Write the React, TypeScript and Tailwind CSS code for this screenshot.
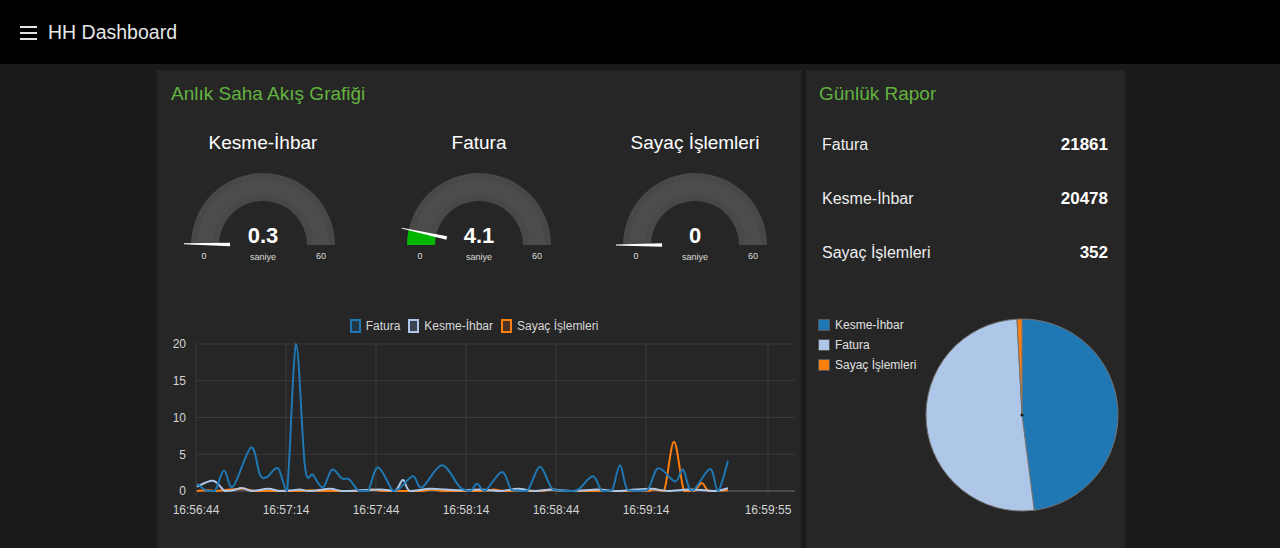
import React from 'react';

type Pt = [number, number];

const BLUE = '#1f77b4';
const LIGHT = '#aec7e8';
const ORANGE = '#ff7f0e';

// [page x, value] samples read off the trend chart
const fatura: Pt[] = [
  [197, 1.0], [207, 0], [215, 0], [224, 2.8], [233, 0.6], [251, 5.9], [260, 2.2], [267, 1.9],
  [278, 3.1], [287, 0], [296, 20], [305, 3.3], [313, 2.2], [323, 0.5], [332, 2.9], [342, 1.7],
  [349, 1.6], [359, 0], [368, 0], [378, 3.2], [393, 0], [400, 0.4], [413, 2.0], [422, 0.5],
  [442, 3.5], [460, 0.5], [470, 0], [477, 1.0], [485, 0], [502, 2.6], [512, 0.1], [527, 0],
  [540, 3.3], [553, 0.2], [573, 0], [580, 0.4], [593, 2.0], [602, 0], [612, 0.1], [620, 3.5],
  [628, 0.1], [647, 0.1], [658, 3.1], [675, 1.3], [683, 2.9], [692, 0], [710, 3.0], [718, 0],
  [728, 4.1],
];

const kesme: Pt[] = [
  [197, 0.6], [213, 1.4], [225, 0], [233, 0.1], [242, 0.4], [252, 0], [268, 0.3], [280, 0],
  [292, 0.1], [300, 0.2], [310, 0], [330, 0.3], [342, 0], [360, 0.1], [380, 0.2], [395, 0],
  [403, 1.5], [410, 0], [430, 0.3], [445, 0.2], [462, 0.1], [480, 0.2], [500, 0], [518, 0.3],
  [535, 0], [552, 0.2], [572, 0], [598, 0.2], [615, 0], [635, 0.2], [652, 0.3], [668, 0],
  [688, 0.2], [705, 0.1], [716, 0], [728, 0.4],
];

const sayac: Pt[] = [
  [197, 0], [206, 0.1], [215, 0], [230, 0.2], [244, 0.3], [258, 0], [300, 0], [310, 0.1],
  [320, 0], [360, 0], [372, 0.2], [384, 0], [420, 0], [432, 0.2], [445, 0], [482, 0],
  [494, 0.2], [505, 0], [540, 0], [552, 0.2], [565, 0], [642, 0], [653, 0.2], [664, 0],
  [674, 6.7], [684, 0], [694, 0], [702, 1.1], [709, 0], [728, 0.1],
];

const sx = (px: number) => px - 157;
const sy = (v: number) => 153 - v * 7.35;

function smooth(data: Pt[]) {
  const p = data.map(([x, v]) => [sx(x), sy(v)]);
  const cl = (y: number) => Math.min(153, Math.max(6, y));
  let d = `M${p[0][0]},${p[0][1].toFixed(1)}`;
  for (let i = 0; i < p.length - 1; i++) {
    const p0 = p[i - 1] ?? p[i];
    const p1 = p[i];
    const p2 = p[i + 1];
    const p3 = p[i + 2] ?? p2;
    const c1x = p1[0] + (p2[0] - p0[0]) / 6;
    const c1y = cl(p1[1] + (p2[1] - p0[1]) / 6);
    const c2x = p2[0] - (p3[0] - p1[0]) / 6;
    const c2y = cl(p2[1] - (p3[1] - p1[1]) / 6);
    d += ` C${c1x.toFixed(1)},${c1y.toFixed(1)} ${c2x.toFixed(1)},${c2y.toFixed(1)} ${p2[0]},${p2[1].toFixed(1)}`;
  }
  return d;
}

// gauge helpers, centre of arc inside the gauge svg
const GCX = 106;
const GCY = 87;
const gp = (r: number, f: number) =>
  `${(GCX - r * Math.cos(Math.PI * f)).toFixed(2)},${(GCY - r * Math.sin(Math.PI * f)).toFixed(2)}`;

function band(f0: number, f1: number, ri: number, ro: number) {
  return `M${gp(ro, f0)} A${ro},${ro} 0 0 1 ${gp(ro, f1)} L${gp(ri, f1)} A${ri},${ri} 0 0 0 ${gp(ri, f0)} Z`;
}

function needle(f: number) {
  const a = Math.PI * f;
  const ux = -Math.cos(a);
  const uy = -Math.sin(a);
  const nx = -uy;
  const ny = ux;
  const at = (r: number, w: number) =>
    `${(GCX + ux * r + nx * w).toFixed(2)},${(GCY + uy * r + ny * w).toFixed(2)}`;
  return [at(33, 1.8), at(79, 0.4), at(79, -0.4), at(33, -1.8)].join(' ');
}

const Gauge = ({ title, value }: { title: string; value: number }) => {
  const f = value / 60;
  return (
    <div className="w-[212px] flex flex-col items-center">
      <div className="h-[30px] flex items-center text-[19px] text-white">{title}</div>
      <svg width="212" height="110">
        <path d={band(0, 1, 44, 72)} fill="#484848" />
        <path d={band(0, 1, 50, 66)} fill="#4c4c4c" />
        {f > 0.02 && <path d={band(0, f, 44, 72)} fill="#00b500" />}
        <polygon points={needle(f)} fill="#ffffff" />
        <text x={GCX} y="85" textAnchor="middle" fontSize="22" fontWeight="bold" fill="#ffffff">
          {value}
        </text>
        <text x={GCX} y="102" textAnchor="middle" fontSize="9" fill="#dddddd">saniye</text>
        <text x="47" y="101" textAnchor="middle" fontSize="9" fill="#dddddd">0</text>
        <text x="164" y="101" textAnchor="middle" fontSize="9" fill="#dddddd">60</text>
      </svg>
    </div>
  );
};

const LegendItem = ({ color, tint, label }: { color: string; tint: string; label: string }) => (
  <div className="flex items-center gap-[5px]">
    <span className={`w-[11px] h-[14px] border-2 ${tint}`} style={{ borderColor: color }} />
    <span>{label}</span>
  </div>
);

const gridX = [39, 129, 219, 309, 399, 489, 611];
const timeLabels: [number, string][] = [
  [39, '16:56:44'], [129, '16:57:14'], [219, '16:57:44'], [309, '16:58:14'],
  [399, '16:58:44'], [489, '16:59:14'], [611, '16:59:55'],
];

const TrendChart = () => (
  <div>
    <div className="h-[24px] flex items-center justify-center gap-[8px] pr-[10px] text-[12px] text-[#d8d8d8]">
      <LegendItem color={BLUE} tint="bg-[#243646]" label="Fatura" />
      <LegendItem color={LIGHT} tint="bg-[#3b4350]" label="Kesme-İhbar" />
      <LegendItem color={ORANGE} tint="bg-[#4a3322]" label="Sayaç İşlemleri" />
    </div>
    <svg width="644" height="184">
      {[0, 5, 10, 15, 20].map((v) => (
        <g key={v}>
          <line x1="39" x2="638" y1={sy(v)} y2={sy(v)} stroke={v === 0 ? '#6e6e6e' : '#3b3b3b'} />
          <text x="29" y={sy(v) + 4.3} textAnchor="end" fontSize="12" fill="#d4d4d4">{v}</text>
        </g>
      ))}
      {gridX.map((x) => (
        <line key={x} x1={x} x2={x} y1="6" y2="159" stroke="#3b3b3b" />
      ))}
      {timeLabels.map(([x, t]) => (
        <text key={t} x={x} y="175.5" textAnchor="middle" fontSize="12" fill="#d4d4d4">{t}</text>
      ))}
      <path d={smooth(sayac)} fill="none" stroke={ORANGE} strokeWidth="2" />
      <path d={smooth(kesme)} fill="none" stroke={LIGHT} strokeWidth="2" />
      <path d={smooth(fatura)} fill="none" stroke={BLUE} strokeWidth="2" />
    </svg>
  </div>
);

const report = [
  { label: 'Fatura', value: 21861, color: LIGHT },
  { label: 'Kesme-İhbar', value: 20478, color: BLUE },
  { label: 'Sayaç İşlemleri', value: 352, color: ORANGE },
];

const pieOrder = [report[1], report[0], report[2]];

const PieChart = () => {
  const total = pieOrder.reduce((s, r) => s + r.value, 0);
  const cx = 105;
  const cy = 106;
  const R = 96;
  const at = (deg: number) => {
    const a = (deg * Math.PI) / 180;
    return `${(cx + R * Math.sin(a)).toFixed(2)},${(cy - R * Math.cos(a)).toFixed(2)}`;
  };
  let start = 0;
  return (
    <svg width="212" height="212">
      {pieOrder.map((s) => {
        const sweep = (s.value / total) * 360;
        const d = `M${cx},${cy} L${at(start)} A${R},${R} 0 ${sweep > 180 ? 1 : 0} 1 ${at(start + sweep)} Z`;
        start += sweep;
        return <path key={s.label} d={d} fill={s.color} stroke="#727272" strokeWidth="1" />;
      })}
      <circle cx={cx} cy={cy} r="1.6" fill="#1e1e1e" />
    </svg>
  );
};

export default function App() {
  return (
    <div className="min-h-screen bg-[#1a1a1a] font-['Liberation_Sans',Arial,sans-serif] overflow-hidden">
      <header className="h-[64px] bg-black flex items-center px-[20px] pt-[2px] gap-[11px]">
        <svg width="17" height="14" viewBox="0 0 17 14">
          <rect x="0" y="0" width="17" height="2" fill="#e4e4e4" />
          <rect x="0" y="6" width="17" height="2" fill="#e4e4e4" />
          <rect x="0" y="12" width="17" height="2" fill="#e4e4e4" />
        </svg>
        <span className="text-[19.5px] text-[#e6e6e6]">HH Dashboard</span>
      </header>

      <main className="flex justify-center gap-[5px] pt-[6px] pl-[2px]">
        <section className="w-[644px] h-[500px] bg-[#262626]">
          <div className="h-[46px] flex items-center pl-[14px] pt-[2px] text-[19px] text-[#62b23f]">
            Anlık Saha Akış Grafiği
          </div>
          <div className="flex gap-[4px] pt-[12px]">
            <Gauge title="Kesme-İhbar" value={0.3} />
            <Gauge title="Fatura" value={4.1} />
            <Gauge title="Sayaç İşlemleri" value={0} />
          </div>
          <div className="mt-[46px]">
            <TrendChart />
          </div>
        </section>

        <section className="w-[319px] h-[500px] bg-[#262626]">
          <div className="h-[46px] flex items-center pl-[13px] pt-[2px] text-[19px] text-[#62b23f]">
            Günlük Rapor
          </div>
          <div className="pt-[2px]">
            {report.map((r) => (
              <div key={r.label} className="h-[54px] flex items-center justify-between pl-[16px] pr-[17px] text-[16px]">
                <span className="text-[#eeeeee]">{r.label}</span>
                <span className="font-bold text-[17px] text-white">{r.value}</span>
              </div>
            ))}
          </div>
          <div className="mt-[29px] flex">
            <div className="w-[111px] shrink-0 pl-[12px] pt-[6px] text-[12px] text-[#e0e0e0] whitespace-nowrap">
              {pieOrder.map((s) => (
                <div key={s.label} className="h-[20px] flex items-center gap-[5px]">
                  <span className="w-[12px] h-[12px] border border-[#555555]" style={{ backgroundColor: s.color }} />
                  <span>{s.label}</span>
                </div>
              ))}
            </div>
            <PieChart />
          </div>
        </section>
      </main>
    </div>
  );
}
